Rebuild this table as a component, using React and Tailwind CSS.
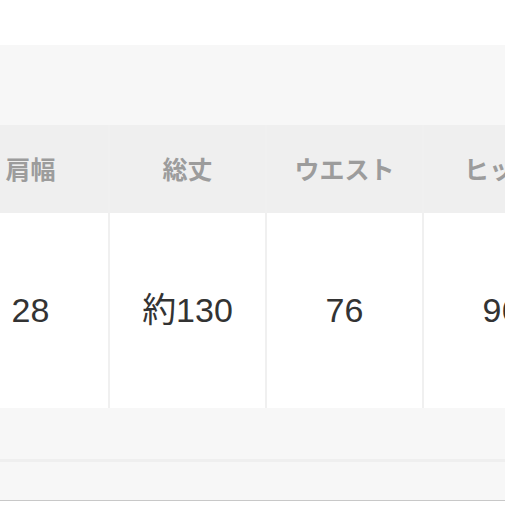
import React from 'react';

const cols = [
  { label: '肩幅', value: '28' },
  { label: '総丈', value: '約130' },
  { label: 'ウエスト', value: '76' },
  { label: 'ヒップ', value: '96' },
];

const App = () => (
  <div
    className="w-[505px] h-[505px] overflow-hidden bg-white"
    style={{ fontFamily: '"Noto Sans CJK JP", "Liberation Sans", sans-serif' }}
  >
    {/* top spacer */}
    <div className="h-[45px] bg-white" />
    <div className="h-[80px] bg-[#f7f7f7]" />

    {/* size table */}
    <div className="flex ml-[-47px]">
      {cols.map((c) => (
        <div key={c.label} className="w-[157px] shrink-0 flex flex-col border-r-2 border-[#f0f0f0]">
          <div className="h-[88px] bg-[#efefef] flex items-center justify-center text-[25px] font-semibold text-[#9c9c9c] whitespace-nowrap">
            {c.label}
          </div>
          <div className="h-[195px] bg-white flex items-center justify-center text-[34px] text-[#333333] whitespace-nowrap font-['Liberation_Sans','Noto_Sans_CJK_JP',sans-serif]">
            {c.value}
          </div>
        </div>
      ))}
    </div>

    {/* bottom bands */}
    <div className="h-[54px] bg-[#f7f7f7] border-b-[3px] border-[#efefef]" />
    <div className="h-[39px] bg-[#f7f7f7] border-b border-[#c8c8c8]" />
  </div>
);

export default App;
